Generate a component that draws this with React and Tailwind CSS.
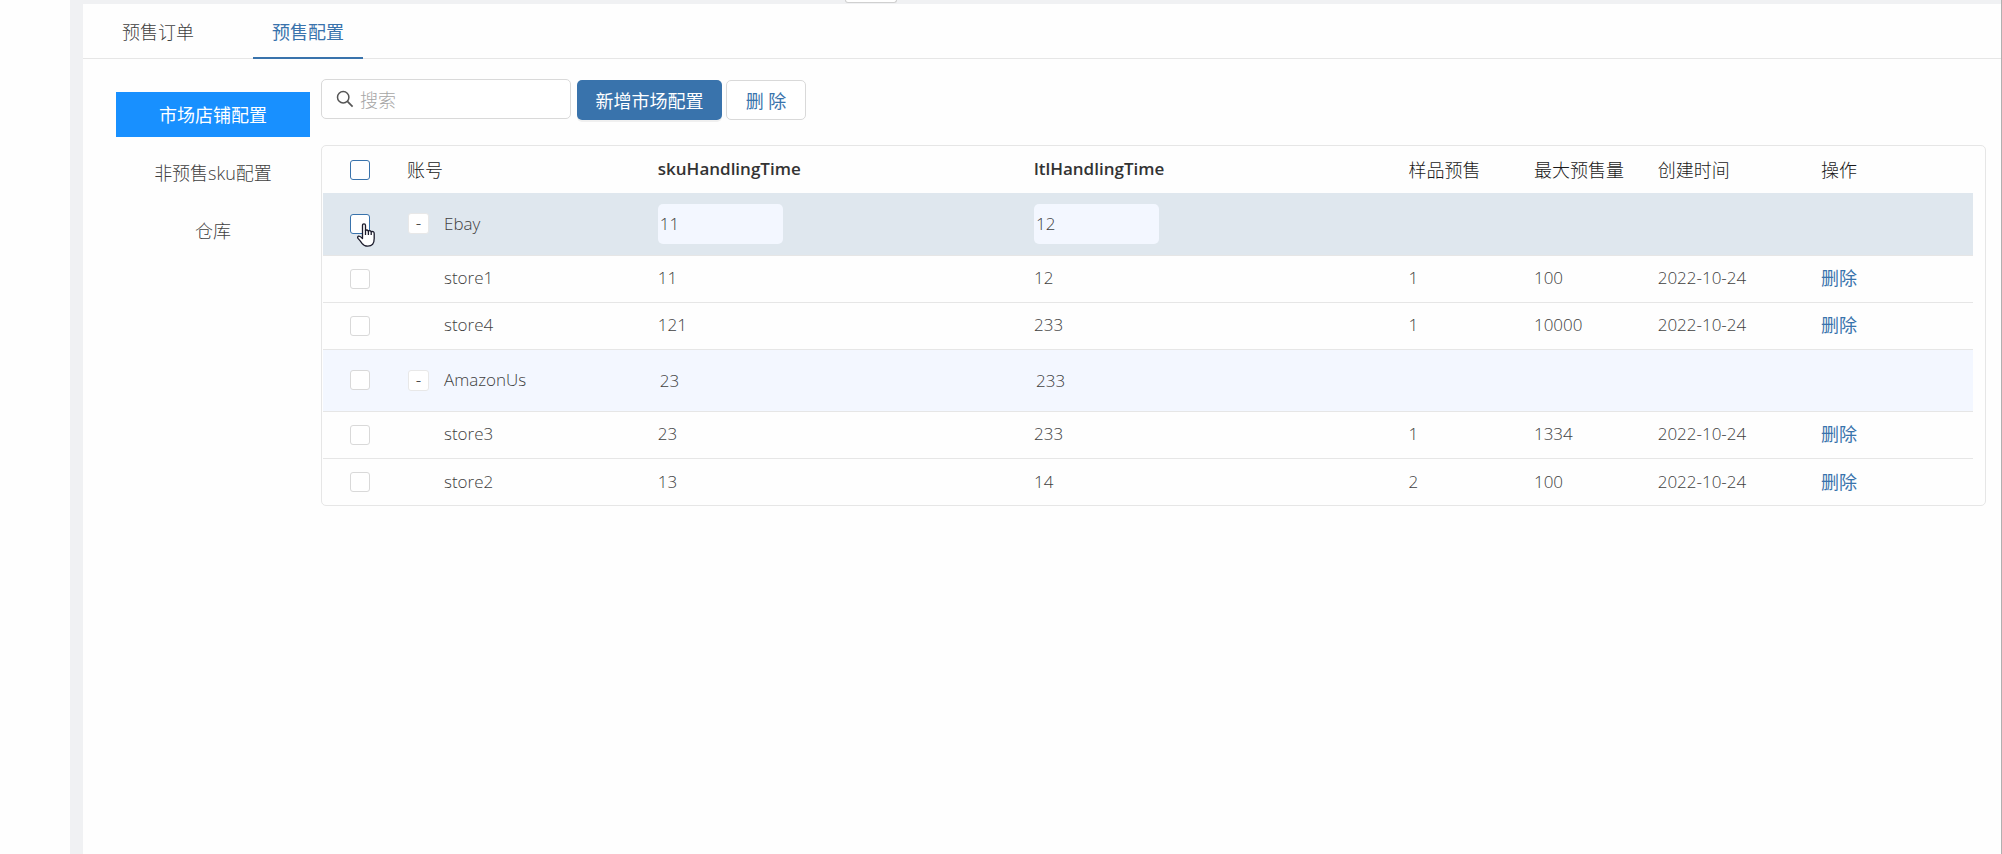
import { useState } from 'react'

const tabs = ['预售订单', '预售配置']
const menu = ['市场店铺配置', '非预售sku配置', '仓库']

const markets = [
    {
        name: 'Ebay',
        sku: '11',
        ltl: '12',
        active: true,
        stores: [
            { name: 'store1', sku: '11', ltl: '12', sample: '1', max: '100', created: '2022-10-24' },
            { name: 'store4', sku: '121', ltl: '233', sample: '1', max: '10000', created: '2022-10-24' },
        ],
    },
    {
        name: 'AmazonUs',
        sku: '23',
        ltl: '233',
        active: false,
        stores: [
            { name: 'store3', sku: '23', ltl: '233', sample: '1', max: '1334', created: '2022-10-24' },
            { name: 'store2', sku: '13', ltl: '14', sample: '2', max: '100', created: '2022-10-24' },
        ],
    },
]

function Checkbox({ label, active }) {
    return (
        <input
            type="checkbox"
            aria-label={label}
            className={`block size-5 appearance-none rounded-[3px] border bg-white checked:bg-[#3973ac] ${active ? 'border-[#3973ac]' : 'border-[#d9d9d9]'}`}
        />
    )
}

function SearchIcon() {
    return (
        <svg viewBox="0 0 18 18" className="size-[18px] shrink-0" fill="none" stroke="#555" strokeWidth="1.5">
            <circle cx="7.2" cy="7.2" r="5.7" />
            <path d="M11.4 11.4 L16.6 16.6" strokeWidth="1.7" />
        </svg>
    )
}

function HandCursor() {
    return (
        <svg viewBox="0 0 18 24" className="pointer-events-none absolute top-[30px] left-[34px] z-10 h-6 w-[18px]">
            <path
                d="M5.5 14.5 V2.5 Q5.5 0.8 7 0.8 Q8.5 0.8 8.5 2.5 V7.5 Q10 6.4 11.4 8 Q13 7 14.2 8.6 Q17.2 8 17.2 10.8 V15.5 Q17.2 23.2 10.8 23.2 Q7 23.2 5 20.4 Q3.4 18 1 15.4 Q0 13.8 1.6 13.2 Q3 12.8 5.5 15.5 Z"
                fill="#fff"
                stroke="#1b1b2b"
                strokeWidth="1.3"
                strokeLinejoin="round"
            />
            <path d="M8.5 7 V12 M11.4 8 V12 M14.2 8.6 V12" fill="none" stroke="#1b1b2b" strokeWidth="1.3" />
        </svg>
    )
}

function MarketRow({ market, open, onToggle }) {
    return (
        <tr className={`h-[62px] border-b border-[#e6e6e6] ${market.active ? 'bg-[#dfe7ee]' : 'border-t bg-[#f3f7ff]'}`}>
            <td className="relative pl-[27px]">
                <Checkbox label={market.name} active={market.active} />
                {market.active && <HandCursor />}
            </td>
            <td className="pl-[11px]">
                <div className="flex items-center gap-[15px]">
                    <button
                        onClick={onToggle}
                        aria-label={`toggle ${market.name}`}
                        className="flex size-[21px] items-center justify-center rounded-[3px] border border-[#e8e8e8] bg-white pb-[2px] leading-none text-[#222]"
                    >
                        {open ? '-' : '+'}
                    </button>
                    {market.name}
                </div>
            </td>
            {[market.sku, market.ltl].map((value, i) => (
                <td key={i} className="pl-[10px]">
                    <input
                        defaultValue={value}
                        aria-label={`${market.name} ${i ? 'ltlHandlingTime' : 'skuHandlingTime'}`}
                        className="block h-10 w-[125px] rounded-[5px] bg-[#f3f7ff] px-[2px] outline-none"
                    />
                </td>
            ))}
            <td colSpan={4} />
        </tr>
    )
}

function StoreRow({ store }) {
    return (
        <tr className="h-[47px] border-b border-[#e6e6e6] last:border-b-0">
            <td className="pl-[27px]">
                <Checkbox label={store.name} />
            </td>
            <td className="pl-[47px]">{store.name}</td>
            <td className="pl-[10px]">{store.sku}</td>
            <td className="pl-[10px]">{store.ltl}</td>
            <td className="pl-[10px]">{store.sample}</td>
            <td className="pl-[10px]">{store.max}</td>
            <td className="pl-[10px]">{store.created}</td>
            <td className="pl-[10px]">
                <a href="#delete" className="text-lg font-normal text-[#3973ac]">删除</a>
            </td>
        </tr>
    )
}

function ConfigTable() {
    const [closed, setClosed] = useState([])

    const toggle = (name) => {
        setClosed(closed.includes(name) ? closed.filter((n) => n !== name) : [...closed, name])
    }

    return (
        <div className="rounded-[5px] border border-[#e6e6e6] pr-3 pl-px">
            <table className="w-full table-fixed border-collapse text-left text-[17px]">
                <colgroup>
                    <col className="w-[74px]" />
                    <col className="w-[15.2%]" />
                    <col className="w-[22.8%]" />
                    <col className="w-[22.7%]" />
                    <col className="w-[7.6%]" />
                    <col className="w-[7.5%]" />
                    <col className="w-[9.9%]" />
                    <col />
                </colgroup>
                <thead className="text-[#1a1a1a]">
                    <tr className="h-[47px]">
                        <th className="pl-[27px]">
                            <Checkbox label="全选" active />
                        </th>
                        <th className="pl-[10px] text-lg font-light">账号</th>
                        <th className="pl-[10px] font-semibold text-[#333]">skuHandlingTime</th>
                        <th className="pl-[10px] font-semibold text-[#333]">ltlHandlingTime</th>
                        <th className="pl-[10px] text-lg font-light">样品预售</th>
                        <th className="pl-[10px] text-lg font-light">最大预售量</th>
                        <th className="pl-[10px] text-lg font-light">创建时间</th>
                        <th className="pl-[10px] text-lg font-light">操作</th>
                    </tr>
                </thead>
                {markets.map((market) => (
                    <tbody key={market.name}>
                        <MarketRow
                            market={market}
                            open={!closed.includes(market.name)}
                            onToggle={() => toggle(market.name)}
                        />
                        {!closed.includes(market.name) &&
                            market.stores.map((store) => <StoreRow key={store.name} store={store} />)}
                    </tbody>
                ))}
            </table>
        </div>
    )
}

export default function App() {
    const [tab, setTab] = useState(1)
    const [item, setItem] = useState(0)

    return (
        <div className="flex min-h-screen border-r border-[#b0b0b0] bg-[#f0f1f3] font-['Open_Sans','Noto_Sans_CJK_SC',sans-serif] text-lg font-light text-[#404040]">
            <aside className="mr-[13px] w-[70px] shrink-0 bg-[#fefefe]" />
            <div className="relative flex min-w-0 flex-1 flex-col pt-1">
                {/* Bottom edge of the popover above */}
                <div className="absolute top-0 left-[762px] h-[3px] w-[52px] rounded-b-[3px] border border-t-0 border-[#d0d0d0] bg-white" />

                <main className="flex-1 bg-[#fefefe]">
                    {/* Tabs */}
                    <nav className="flex h-[55px] gap-10 border-b border-[#e6e6e6] pl-5">
                        {tabs.map((name, i) => (
                            <button
                                key={name}
                                onClick={() => setTab(i)}
                                className={`h-[55px] border-b-2 px-[19px] pt-[3px] ${i === tab ? 'border-[#3973ac] font-normal text-[#3973ac]' : 'border-transparent'}`}
                            >
                                {name}
                            </button>
                        ))}
                    </nav>

                    <div className="flex gap-[11px] pt-5 pr-[15px] pl-[33px]">
                        {/* Side menu */}
                        <nav className="flex w-[194px] shrink-0 flex-col gap-[13px] pt-[13px]">
                            {menu.map((name, i) => (
                                <button
                                    key={name}
                                    onClick={() => setItem(i)}
                                    className={`h-[45px] w-full ${i === item ? 'bg-[#1890ff] font-normal text-white' : ''}`}
                                >
                                    {name}
                                </button>
                            ))}
                        </nav>

                        <section className="min-w-0 flex-1">
                            <div className="mb-[25px] flex h-[41px] items-end">
                                <label className="mr-[6px] flex h-10 w-[250px] items-center gap-[6px] self-start rounded-[5px] border border-[#d9d9d9] bg-white px-[14px]">
                                    <SearchIcon />
                                    <input
                                        type="text"
                                        placeholder="搜索"
                                        aria-label="搜索"
                                        className="w-full min-w-0 pt-[2px] outline-none placeholder:text-[#a6a6a6]"
                                    />
                                </label>
                                <button className="mr-1 h-10 w-[145px] rounded-[5px] bg-[#3973ac] pt-[2px] font-normal text-white shadow-[0_2px_0_#f0f0f0]">
                                    新增市场配置
                                </button>
                                <button className="h-10 w-20 rounded-[5px] border border-[#d9d9d9] bg-white pt-[2px] font-normal text-[#3973ac]">
                                    删 除
                                </button>
                            </div>
                            <ConfigTable />
                        </section>
                    </div>
                </main>
            </div>
        </div>
    )
}
